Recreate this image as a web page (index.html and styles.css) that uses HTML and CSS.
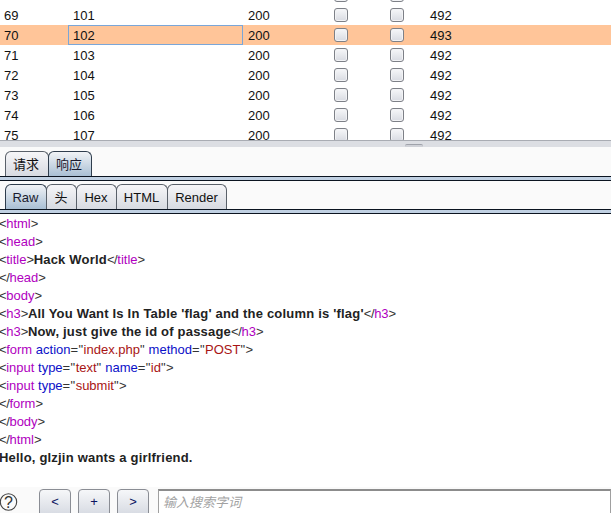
FILE: index.html
```html
<!DOCTYPE html>
<html lang="zh">
<head>
<meta charset="utf-8">
<title>Response</title>
<link rel="stylesheet" href="styles.css">
</head>
<body>
<div class="app">
  <div class="table-view">
    <div class="rows">
      <div class="row"><span class="c-num"></span><span class="c-pay"></span><span class="c-status"></span><span class="c-box"><i class="box"></i></span><span class="c-box"><i class="box"></i></span><span class="c-len"></span></div>
      <div class="row"><span class="c-num">69</span><span class="c-pay">101</span><span class="c-status">200</span><span class="c-box"><i class="box"></i></span><span class="c-box"><i class="box"></i></span><span class="c-len">492</span></div>
      <div class="row selected"><span class="c-num">70</span><span class="c-pay focus">102</span><span class="c-status">200</span><span class="c-box"><i class="box"></i></span><span class="c-box"><i class="box"></i></span><span class="c-len">493</span></div>
      <div class="row"><span class="c-num">71</span><span class="c-pay">103</span><span class="c-status">200</span><span class="c-box"><i class="box"></i></span><span class="c-box"><i class="box"></i></span><span class="c-len">492</span></div>
      <div class="row"><span class="c-num">72</span><span class="c-pay">104</span><span class="c-status">200</span><span class="c-box"><i class="box"></i></span><span class="c-box"><i class="box"></i></span><span class="c-len">492</span></div>
      <div class="row"><span class="c-num">73</span><span class="c-pay">105</span><span class="c-status">200</span><span class="c-box"><i class="box"></i></span><span class="c-box"><i class="box"></i></span><span class="c-len">492</span></div>
      <div class="row"><span class="c-num">74</span><span class="c-pay">106</span><span class="c-status">200</span><span class="c-box"><i class="box"></i></span><span class="c-box"><i class="box"></i></span><span class="c-len">492</span></div>
      <div class="row"><span class="c-num">75</span><span class="c-pay">107</span><span class="c-status">200</span><span class="c-box"><i class="box"></i></span><span class="c-box"><i class="box"></i></span><span class="c-len">492</span></div>
    </div>
  </div>
  <div class="splitter"><span class="grip"></span></div>
  <div class="tabbar outer">
    <span class="tab w-cjk">请求</span>
    <span class="tab w-cjk active">响应</span>
  </div>
  <div class="tabbar inner">
    <span class="tab w-raw active">Raw</span>
    <span class="tab w-head">头</span>
    <span class="tab w-hex">Hex</span>
    <span class="tab w-html">HTML</span>
    <span class="tab w-render">Render</span>
  </div>
  <div class="code">
    <div class="line"><b class="p">&lt;</b><span class="t">html</span><b class="p">&gt;</b></div>
    <div class="line"><b class="p">&lt;</b><span class="t">head</span><b class="p">&gt;</b></div>
    <div class="line"><b class="p">&lt;</b><span class="t">title</span><b class="p">&gt;</b><strong>Hack World</strong><b class="p">&lt;/</b><span class="t">title</span><b class="p">&gt;</b></div>
    <div class="line"><b class="p">&lt;/</b><span class="t">head</span><b class="p">&gt;</b></div>
    <div class="line"><b class="p">&lt;</b><span class="t">body</span><b class="p">&gt;</b></div>
    <div class="line"><b class="p">&lt;</b><span class="t">h3</span><b class="p">&gt;</b><strong>All You Want Is In Table 'flag' and the column is 'flag'</strong><b class="p">&lt;/</b><span class="t">h3</span><b class="p">&gt;</b></div>
    <div class="line"><b class="p">&lt;</b><span class="t">h3</span><b class="p">&gt;</b><strong>Now, just give the id of passage</strong><b class="p">&lt;/</b><span class="t">h3</span><b class="p">&gt;</b></div>
    <div class="line"><b class="p">&lt;</b><span class="t">form</span> <span class="a">action</span><b class="e">="</b><span class="v">index.php</span><b class="e">"</b> <span class="a">method</span><b class="e">="</b><span class="v">POST</span><b class="e">"</b><b class="p">&gt;</b></div>
    <div class="line"><b class="p">&lt;</b><span class="t">input</span> <span class="a">type</span><b class="e">="</b><span class="v">text</span><b class="e">"</b> <span class="a">name</span><b class="e">="</b><span class="v">id</span><b class="e">"</b><b class="p">&gt;</b></div>
    <div class="line"><b class="p">&lt;</b><span class="t">input</span> <span class="a">type</span><b class="e">="</b><span class="v">submit</span><b class="e">"</b><b class="p">&gt;</b></div>
    <div class="line"><b class="p">&lt;/</b><span class="t">form</span><b class="p">&gt;</b></div>
    <div class="line"><b class="p">&lt;/</b><span class="t">body</span><b class="p">&gt;</b></div>
    <div class="line"><b class="p">&lt;/</b><span class="t">html</span><b class="p">&gt;</b></div>
    <div class="line"><strong>Hello, glzjin wants a girlfriend.</strong></div>
  </div>
  <div class="searchbar">
    <svg class="help" width="18" height="20" viewBox="0 0 18 20"><circle cx="8.5" cy="10" r="8.2" fill="none" stroke="#444" stroke-width="1.1"/><text x="8.5" y="15.5" text-anchor="middle" class="q">?</text></svg>
    <span class="btn">&lt;</span>
    <span class="btn">+</span>
    <span class="btn">&gt;</span>
    <div class="search">输入搜索字词</div>
  </div>
</div>
</body>
</html>
```
FILE: styles.css
```css
html, body {
  margin: 0;
  padding: 0;
  background: #fff;
}
.app {
  width: 611px;
  height: 513px;
  overflow: hidden;
  display: flex;
  flex-direction: column;
  font: 13px "Liberation Sans", "Noto Sans CJK SC", Arial, sans-serif;
  color: #111;
}
.table-view {
  height: 140px;
  flex: none;
  overflow: hidden;
  background: #fff;
}
.rows {
  margin-top: -15px;
}
.row {
  display: flex;
  height: 20px;
  align-items: flex-start;
  line-height: 22px;
}
.row.selected {
  background: #ffc599;
}
.c-num {
  width: 68px;
  padding-left: 4px;
  box-sizing: border-box;
}
.c-pay {
  width: 175px;
  height: 20px;
  padding-left: 5px;
  box-sizing: border-box;
}
.c-pay.focus {
  border: 1px solid #7aa6d8;
  padding-left: 4px;
  line-height: 20px;
}
.c-status {
  width: 86px;
  padding-left: 5px;
  box-sizing: border-box;
}
.c-box {
  width: 56px;
  padding-left: 5px;
  box-sizing: border-box;
  display: flex;
  align-self: center;
}
.box {
  display: block;
  width: 14px;
  height: 14px;
  box-sizing: border-box;
  border: 1px solid #7d8087;
  border-radius: 3px;
  background: linear-gradient(#f6f7f9, #d8dbe2);
  box-shadow: inset 0 0 0 1px #f2f3f5;
}
.c-len {
  margin-left: -11px;
}
.splitter {
  flex: none;
  height: 7px;
  box-sizing: border-box;
  border-top: 1px solid #a9acb3;
  background: #dcdee3;
  position: relative;
}
.grip {
  position: absolute;
  left: 405px;
  top: 3px;
  width: 18px;
  height: 3px;
  border-top: 1px solid #9fa2aa;
  border-radius: 2px 2px 0 0;
  background: #cfd1d7;
}
.tabbar {
  flex: none;
  display: flex;
  box-sizing: border-box;
  background: #fafafa;
  padding-left: 5px;
  align-items: flex-end;
  border-bottom: 5px solid #c0d0e2;
  position: relative;
}
.tabbar.outer {
  height: 34px;
}
.tabbar.inner {
  height: 33px;
}
.tabbar::after {
  content: "";
  position: absolute;
  left: 0;
  right: 0;
  bottom: -5px;
  border-top: 1px solid #0b1420;
  border-bottom: 1px solid #0b1420;
  height: 3px;
}
.tab {
  display: block;
  box-sizing: border-box;
  height: 25px;
  line-height: 25px;
  border: 1px solid #596069;
  border-bottom: 0;
  border-radius: 6px 6px 0 0;
  background: linear-gradient(#f6f6f8, #d7dae1);
  margin-right: -1px;
  text-align: center;
  color: #111;
}
.w-cjk { width: 44px; padding-right: 2px; }
.w-raw { width: 42px; padding-right: 1px; }
.w-head { width: 31px; padding-right: 1px; }
.w-hex { width: 41px; padding-right: 1px; }
.w-html { width: 52px; padding-right: 1px; }
.w-render { width: 60px; padding-right: 1px; }
.tab.active {
  background: linear-gradient(#f1f3f6, #a9bfd4);
  border-color: #2f3d4d;
  color: #1a1a2e;
}
.code {
  flex: 1;
  min-height: 0;
  margin-left: -1px;
  padding-top: 1px;
  background: #fff;
  color: #222;
}
.line {
  height: 18px;
  line-height: 18px;
  white-space: pre;
}
.line strong {
  font-weight: 700;
  letter-spacing: .2px;
}
.p { font-weight: 400; color: #333; letter-spacing: -.4px; }
.e { font-weight: 400; color: #333; letter-spacing: .4px; }
.t { color: #b000c0; }
.a { color: #0c10c8; }
.v { color: #a81414; }
.searchbar {
  flex: none;
  box-sizing: border-box;
  height: 26px;
  display: flex;
  align-items: flex-start;
  background: #fafafa;
  padding-top: 2px;
}
.help {
  flex: none;
  margin: 3px 21px 0 0;
  width: 18px;
}
.q {
  font: 16px "Liberation Sans", sans-serif;
  fill: #333;
}
.btn {
  flex: none;
  width: 32px;
  height: 28px;
  box-sizing: border-box;
  border: 1px solid #8a8d94;
  border-radius: 4px;
  background: linear-gradient(#f6f7f9, #d5d9e1);
  margin-right: 7px;
  text-align: center;
  line-height: 24px;
  color: #0b1460;
}
.search {
  flex: 1;
  height: 28px;
  box-sizing: border-box;
  margin-left: 2px;
  border: 1px solid #a0a0a0;
  border-top: 2px solid #8c8c8c;
  background: #fff;
  padding-left: 4px;
  line-height: 23px;
  font-style: italic;
  color: #a2a2a2;
}
```
